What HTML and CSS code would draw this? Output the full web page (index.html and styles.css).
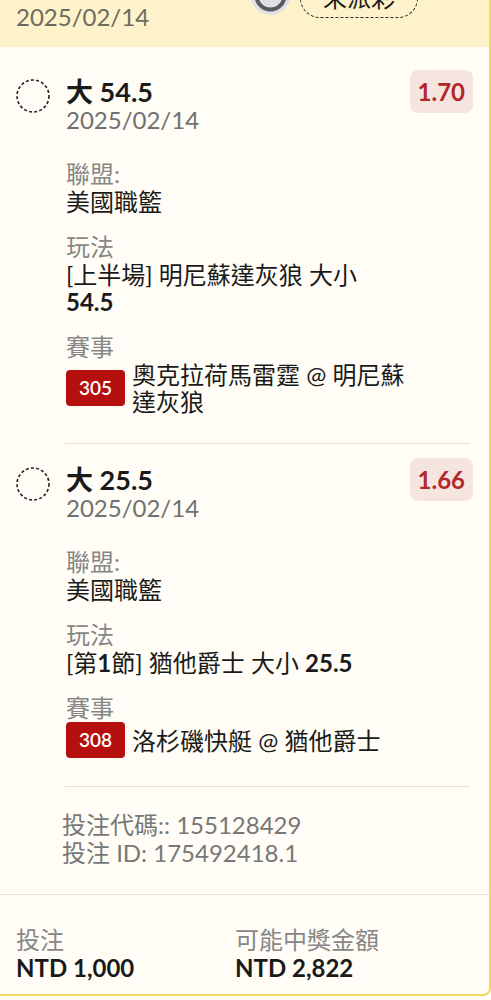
FILE: index.html
```html
<!DOCTYPE html>
<html>

<head>
  <meta charset="UTF-8">
  <meta name="viewport" content="width=device-width, initial-scale=1.0">
  <title>投注單</title>
  <link rel="stylesheet" href="styles.css">
</head>

<body>
  <div class="slip">
    <div class="head">
      <div class="head-date">2025/02/14</div>
      <div class="head-tools">
        <span class="sync">
          <svg width="39" height="39" viewBox="0 0 39 39">
            <circle cx="19.5" cy="19.5" r="19.5" fill="#dfe0e5" />
            <circle cx="19.5" cy="19.5" r="14" fill="none" stroke="#5b5b5e" stroke-width="4" />
          </svg>
        </span>
        <span class="status">未派彩</span>
      </div>
    </div>

    <div class="bet first">
      <svg class="check" width="34" height="34" viewBox="0 0 34 34">
        <circle cx="17" cy="17" r="16" fill="none" stroke="#222" stroke-width="1.6" stroke-dasharray="3 2.2" />
      </svg>
      <div class="bet-main">
        <div class="bet-title">大 54.5</div>
        <div class="bet-date">2025/02/14</div>
        <div class="field top">
          <div class="label">聯盟:</div>
          <div class="value">美國職籃</div>
        </div>
        <div class="field">
          <div class="label">玩法</div>
          <div class="value">[上半場] 明尼蘇達灰狼 大小 <strong>54.5</strong></div>
        </div>
        <div class="field">
          <div class="label">賽事</div>
          <div class="match">
            <span class="num">305</span>
            <span class="value">奧克拉荷馬雷霆 @ 明尼蘇達灰狼</span>
          </div>
        </div>
      </div>
      <div class="odds">1.70</div>
    </div>
    <hr class="sep">

    <div class="bet">
      <svg class="check" width="34" height="34" viewBox="0 0 34 34">
        <circle cx="17" cy="17" r="16" fill="none" stroke="#222" stroke-width="1.6" stroke-dasharray="3 2.2" />
      </svg>
      <div class="bet-main">
        <div class="bet-title">大 25.5</div>
        <div class="bet-date">2025/02/14</div>
        <div class="field top">
          <div class="label">聯盟:</div>
          <div class="value">美國職籃</div>
        </div>
        <div class="field">
          <div class="label">玩法</div>
          <div class="value">[第<strong>1</strong>節] 猶他爵士 大小 <strong>25.5</strong></div>
        </div>
        <div class="field">
          <div class="label">賽事</div>
          <div class="match">
            <span class="num">308</span>
            <span class="value">洛杉磯快艇 @ 猶他爵士</span>
          </div>
        </div>
      </div>
      <div class="odds">1.66</div>
    </div>
    <hr class="sep">

    <div class="ids">
      <div>投注代碼:: 155128429</div>
      <div>投注 ID: 175492418.1</div>
    </div>

    <div class="totals">
      <div>
        <div class="label">投注</div>
        <div class="amount">NTD 1,000</div>
      </div>
      <div>
        <div class="label">可能中獎金額</div>
        <div class="amount">NTD 2,822</div>
      </div>
    </div>
  </div>
</body>

</html>
```

FILE: styles.css
```css
body {
  background: #fffef9;
  color: #1a1a1a;
  font-family: "Lato", "Noto Sans CJK TC", sans-serif;
  font-size: 24px;
  margin: 0;
  padding: 0;
}

.slip {
  background: #fffdf5;
  border-bottom: 2px solid #f3d95c;
  border-bottom-right-radius: 8px;
  border-right: 2px solid #f3d95c;
}

.head {
  align-items: flex-end;
  background: #fdf2c9;
  box-sizing: border-box;
  display: flex;
  height: 47px;
  justify-content: space-between;
  padding: 0 16px 15px;
}

.head-date {
  color: #6d6a60;
  line-height: 30px;
}

.head-tools {
  align-items: flex-end;
  display: flex;
  gap: 10px;
  margin: 0 55px 14px 0;
}

.sync {
  display: block;
  height: 39px;
  margin-bottom: 3px;
}

.sync svg {
  display: block;
}

.status {
  border: 1.5px dashed #2a2a2a;
  border-radius: 20px;
  box-sizing: border-box;
  height: 40px;
  line-height: 37px;
  padding: 0 22px;
}

.bet {
  display: flex;
  padding: 14px 16px 28px;
}

.bet.first {
  padding-top: 23px;
}

.check {
  flex-shrink: 0;
  margin: 9px 16px 0 0;
}

.bet-main {
  flex: 1;
  min-width: 0;
  padding-top: 8px;
}

.bet-title {
  font-size: 27px;
  font-weight: 700;
  line-height: 28px;
}

.bet-date {
  color: #707070;
  line-height: 28px;
}

.field {
  margin-top: 18px;
}

.field.top {
  margin-top: 26px;
}

.label {
  color: #878787;
  line-height: 28px;
}

.value {
  line-height: 27px;
}

.match {
  align-items: center;
  display: flex;
  gap: 7px;
}

.num {
  background: #b50f0f;
  border-radius: 4px;
  color: #fff;
  flex-shrink: 0;
  font-size: 19px;
  font-weight: 600;
  height: 36px;
  line-height: 36px;
  padding: 0 13px;
}

.odds {
  align-self: flex-start;
  background: #f6e5df;
  border-radius: 8px;
  color: #b0282b;
  font-weight: 700;
  height: 43px;
  line-height: 43px;
  margin-left: 4px;
  padding: 0 8px;
}

.sep {
  border: 0;
  border-top: 1px solid #e4e1d8;
  margin: 0 19px 0 65px;
}

.ids {
  color: #777;
  line-height: 28px;
  padding: 24px 16px 27px 62px;
}

.totals {
  border-top: 1px solid #e4e1d8;
  display: grid;
  grid-template-columns: 219px 1fr;
  padding: 31px 16px 12px;
}

.amount {
  font-weight: 700;
  line-height: 28px;
}
```
